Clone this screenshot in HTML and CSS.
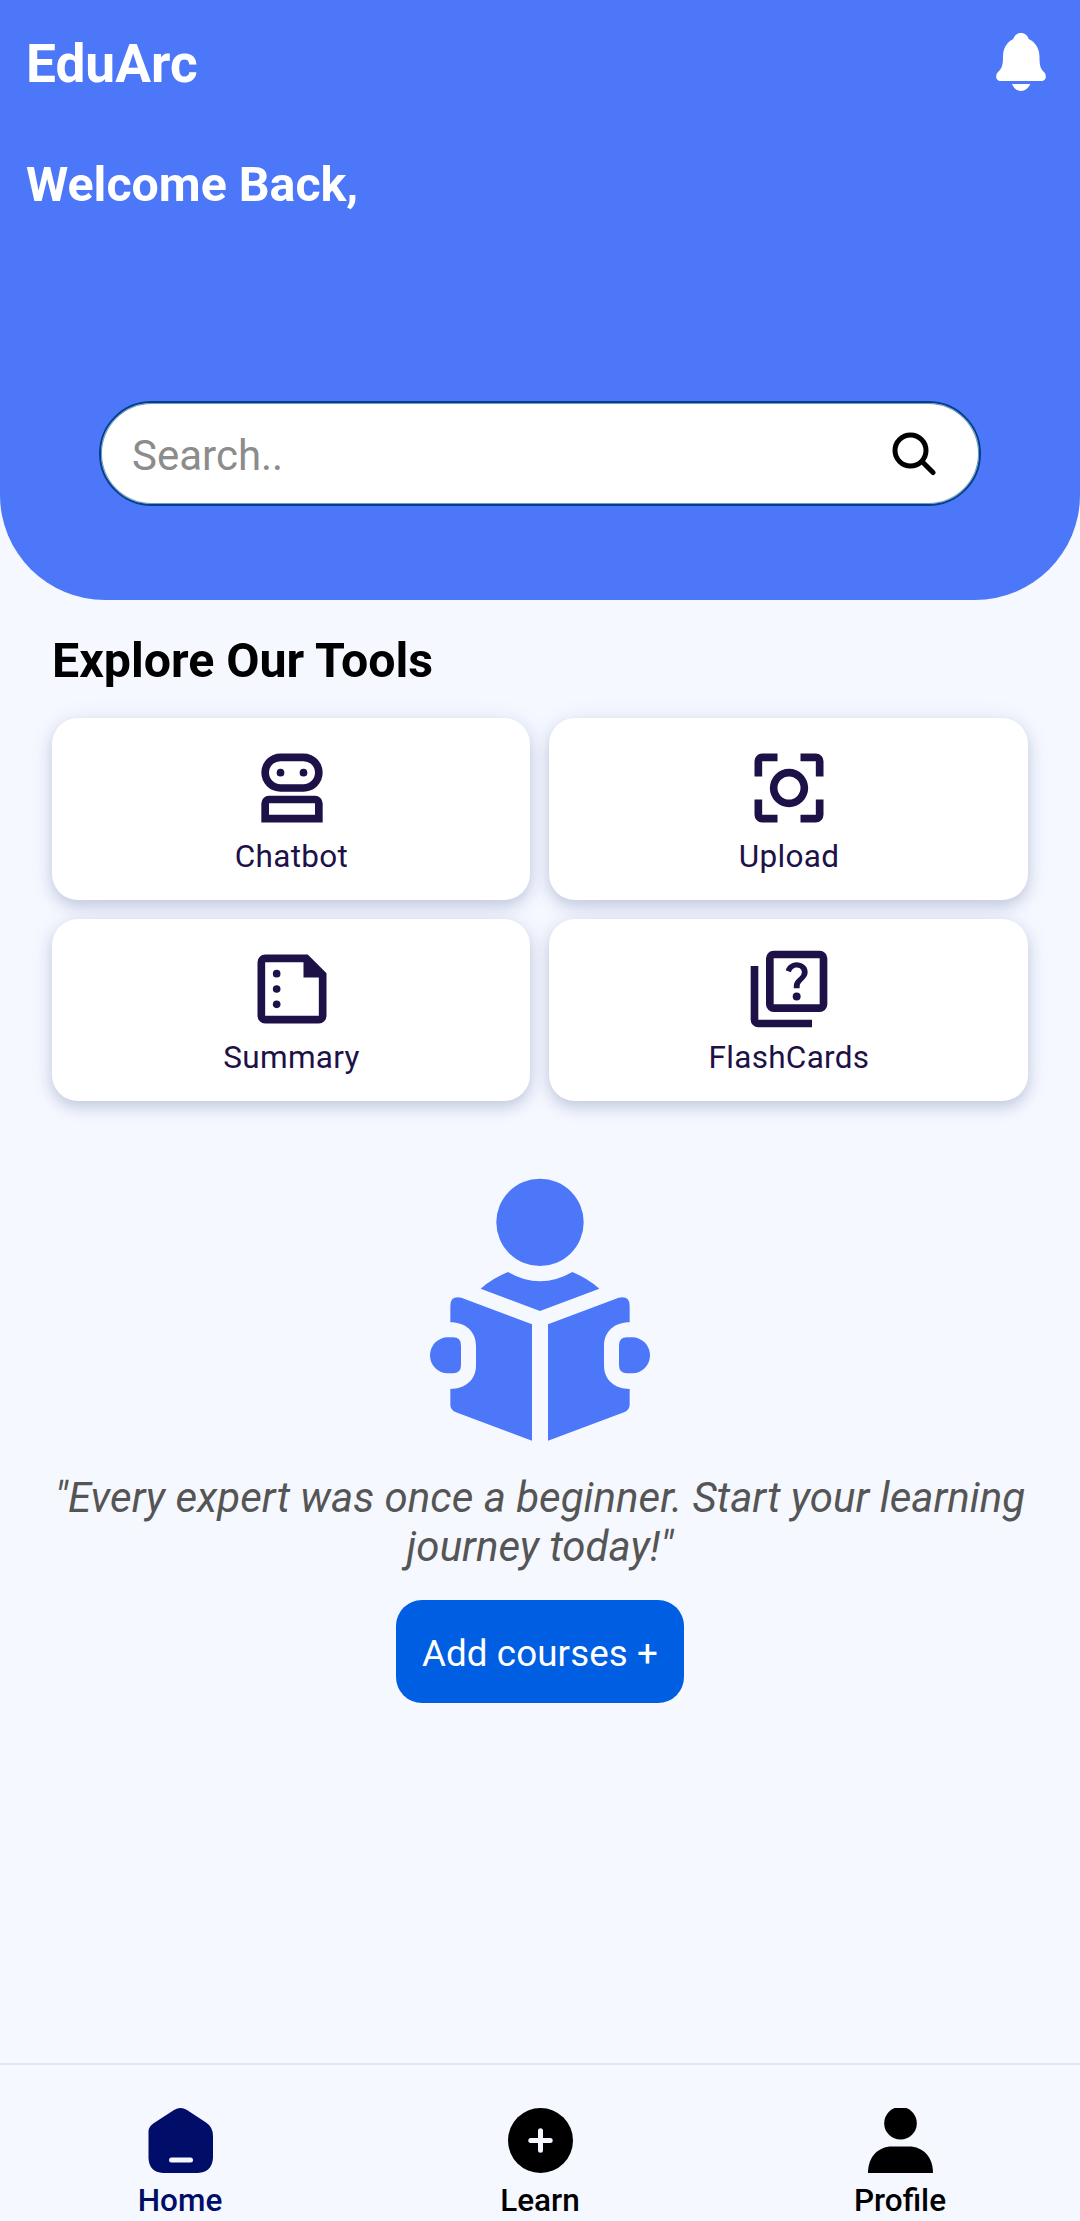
FILE: index.html
```html
<!DOCTYPE html>
<html lang="en">
<head>
<meta charset="utf-8">
<title>EduArc</title>
<link rel="stylesheet" href="styles.css">
</head>
<body>
<header class="hero">
  <div class="topbar">
    <h1 class="brand"><span>EduArc</span></h1>
    <svg class="bell" viewBox="0 0 50 58"><path d="M25 0C21 0 18.500 2.500 17.300 6C11 9 7 15 7 24C7 34 5 36 2 39C-1 42-.5 48 5 48H45C50.500 48 51 42 48 39C45 36 43.500 34 43.500 24C43.500 15 39 9 32.700 6C31.500 2.500 29 0 25 0Z"/><path d="M16 51H34.300C32.500 55 29 58 25 58S17.500 55 16 51Z"/></svg>
  </div>
  <h2 class="welcome"><span>Welcome Back,</span></h2>
  <div class="search">
    <span class="hint">Search..</span>
    <svg class="lens" viewBox="0 0 44 44"><circle cx="18.500" cy="18.500" r="15.500"/><path d="M30 29.500L41 40.500"/></svg>
  </div>
</header>
<main class="content">
  <h2 class="section-title"><span>Explore Our Tools</span></h2>
  <div class="tools">
    <div class="card">
      <svg class="tool-icon" viewBox="0 0 24 24"><path fill-rule="evenodd" d="M9 3h6a5 5 0 0 1 0 10H9A5 5 0 0 1 9 3Zm0 2a3 3 0 0 0 0 6h6a3 3 0 0 0 0-6ZM6 14h12a2 2 0 0 1 2 2v5H4v-5a2 2 0 0 1 2-2Zm0 2v3h12v-3Z"/><circle cx="9" cy="8" r="1"/><circle cx="15" cy="8" r="1"/></svg>
      <span class="label">Chatbot</span>
    </div>
    <div class="card">
      <svg class="tool-icon" viewBox="0 0 24 24"><path fill-rule="evenodd" d="M3 9V5a2 2 0 0 1 2-2h4v2H5v4ZM15 3h4a2 2 0 0 1 2 2v4h-2V5h-4ZM3 15h2v4h4v2H5a2 2 0 0 1-2-2ZM19 15h2v4a2 2 0 0 1-2 2h-4v-2h4ZM12 7a5 5 0 1 1 0 10a5 5 0 0 1 0-10Zm0 2a3 3 0 1 0 0 6a3 3 0 0 0 0-6Z"/></svg>
      <span class="label">Upload</span>
    </div>
    <div class="card">
      <svg class="tool-icon" viewBox="0 0 24 24"><path fill-rule="evenodd" d="M5 3h11.100L21 7.900V19a2 2 0 0 1-2 2H5a2 2 0 0 1-2-2V5a2 2 0 0 1 2-2Zm0 2v14h14V9h-4V5Z"/><circle cx="8" cy="8" r="1"/><circle cx="8" cy="12" r="1"/><circle cx="8" cy="16" r="1"/></svg>
      <span class="label">Summary</span>
    </div>
    <div class="card">
      <svg class="tool-icon" viewBox="0 0 24 24"><path d="M4 6H2v14a2 2 0 0 0 2 2h14v-2H4Z"/><path fill-rule="evenodd" d="M8 2h12a2 2 0 0 1 2 2v12a2 2 0 0 1-2 2H8a2 2 0 0 1-2-2V4a2 2 0 0 1 2-2Zm0 2v12h12V4Z"/><path d="M13.510 10.160c.41-.73 1.180-1.160 1.630-1.800.48-.68.21-1.940-1.140-1.940-.88 0-1.320.67-1.500 1.230l-1.370-.57C11.510 5.960 12.520 5 13.990 5c1.230 0 2.080.56 2.510 1.260.37.600.58 1.730.01 2.570-.63.930-1.230 1.210-1.560 1.810-.13.240-.18.400-.18 1.180h-1.520c.01-.41-.06-1.080.26-1.660Z"/><circle cx="14" cy="13.950" r="1.040"/></svg>
      <span class="label">FlashCards</span>
    </div>
  </div>
  <svg class="reader" viewBox="0 0 780 900"><circle cx="390" cy="187" r="131"/><path d="M294 336Q390 392 487 336Q533 355 568 386L390 453L212 386Q247 355 294 336Z"/><path d="M366 493V842L138 757Q121 750 121 734V687C166 687 198 660 198 616V558C198 514 166 487 121 487V437Q121 406 154 413Z"/><path d="M414 493V842L642 757Q659 750 659 734V687C614 687 582 660 582 616V558C582 514 614 487 659 487V437Q659 406 626 413Z"/><path d="M113 532H129Q153 532 153 557V615Q153 640 129 640H113A53 54 0 0 1 113 532Z"/><path d="M667 532H651Q627 532 627 557V615Q627 640 651 640H667A53 54 0 0 0 667 532Z"/></svg>
  <p class="quote"><span>"Every expert was once a beginner. Start your learning</span><br><span>journey today!"</span></p>
  <button class="add"><span>Add courses +</span></button>
</main>
<nav class="tabs">
  <div class="tab active">
    <svg class="tab-icon" viewBox="0 0 65 65"><path d="M26 2Q32.500-2 39 2L58 14.500Q65 19 65 28V50Q64 64 50 65H15Q1 64 .500 50V23Q1 18 6 15Z"/><path class="cut" d="M23.500 52H42.500"/></svg>
    <span>Home</span>
  </div>
  <div class="tab">
    <svg class="tab-icon" viewBox="0 0 65 65"><circle cx="32.500" cy="32.500" r="32.500"/><path class="cut" d="M22.800 32.500H42.200M32.500 22.800V42.200"/></svg>
    <span>Learn</span>
  </div>
  <div class="tab">
    <svg class="tab-icon" viewBox="0 0 65 65"><circle cx="32.500" cy="15.200" r="16.300"/><path d="M0 65C0 49 10 38.500 24 38.500H41C55 38.500 65 49 65 65Z"/></svg>
    <span>Profile</span>
  </div>
</nav>
</body>
</html>
```
FILE: styles.css
```css
* { box-sizing: border-box; }

body {
  margin: 0;
  height: 2221px;
  display: flex;
  flex-direction: column;
  background: #f5f8ff;
  font-family: Roboto, "Liberation Sans", sans-serif;
  color: #000;
}

h1, h2, p { margin: 0; }
svg { display: block; flex: none; }

.hero {
  height: 600px;
  padding: 33px 34px 0 26px;
  background: #4d77f9;
  border-radius: 0 0 105px 105px;
  color: #fff;
  flex: none;
}

.topbar {
  display: flex;
  justify-content: space-between;
  height: 62px;
}

.brand {
  font-size: 53.200px;
  line-height: 62px;
  font-weight: 700;
}

.bell {
  width: 50px;
  height: 58px;
  fill: #fff;
}

.welcome {
  margin-top: 62px;
  font-size: 48.300px;
  line-height: 56px;
  font-weight: 700;
}

.search {
  display: flex;
  justify-content: space-between;
  align-items: center;
  margin: 188px 65px 0 73px;
  height: 105px;
  padding: 0 43px 0 31px;
  background: #fff;
  border: 2px solid #03408c;
  border-radius: 53px;
  box-shadow: inset 0 0 0 1px #6f9bc0;
}

.hint {
  font-size: 42px;
  line-height: 50px;
  color: #8c8c8c;
  padding-top: 5px;
}

.lens {
  width: 44px;
  height: 44px;
  fill: none;
  stroke: #000;
  stroke-width: 5;
  stroke-linecap: round;
}

.content {
  flex: 1;
  padding: 33px 52px 0;
  display: flex;
  flex-direction: column;
  align-items: center;
}

.section-title {
  align-self: flex-start;
  font-size: 48.300px;
  line-height: 56px;
  font-weight: 700;
}

.tools {
  width: 976px;
  margin-top: 28.700px;
  display: grid;
  grid-template-columns: 478px 479px;
  gap: 19px;
}

.card {
  height: 182.300px;
  padding: 24px 0 0 1px;
  display: flex;
  flex-direction: column;
  align-items: center;
  background: #fff;
  border-radius: 26px;
  box-shadow: 0 6px 14px rgba(30, 40, 120, .19), 0 3px 28px rgba(30, 50, 130, .07);
  color: #1d1147;
}

.tool-icon {
  width: 92px;
  height: 92px;
  fill: #1d1147;
}

.label {
  margin-top: 4px;
  font-size: 31.500px;
  line-height: 37px;
  letter-spacing: .3px;
}

.reader {
  width: 260px;
  height: 300px;
  margin-top: 58.700px;
  fill: #4d77f9;
}

.quote {
  margin-top: 13px;
  font-size: 42px;
  line-height: 49.200px;
  letter-spacing: .02px;
  font-style: italic;
  color: #555;
  text-align: center;
  white-space: nowrap;
}

.add {
  width: 288px;
  height: 103px;
  margin-top: 28.600px;
  padding: 4px 0 0;
  border: 0;
  border-radius: 26px;
  background: #005ee2;
  color: #fff;
  font: 36.750px/43px Roboto, "Liberation Sans", sans-serif;
  letter-spacing: .1px;
}

.tabs {
  height: 158px;
  flex: none;
  display: flex;
  border-top: 2px solid #e2e5ea;
  padding-top: 43px;
}

.tab {
  flex: 1;
  display: flex;
  flex-direction: column;
  align-items: center;
  font-size: 31.500px;
  line-height: 37px;
  font-weight: 500;
}

.tab span { margin-top: 8.500px; }

.tab-icon {
  width: 65px;
  height: 65px;
  fill: #000;
  overflow: hidden;
}

.tab .cut {
  stroke: #f5f8ff;
  stroke-width: 5;
  stroke-linecap: round;
}

.active { color: #000e69; }
.active .tab-icon { fill: #000e69; }
```
